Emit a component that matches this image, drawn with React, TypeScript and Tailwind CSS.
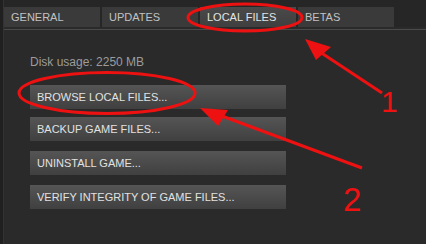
const tabs = ['GENERAL', 'UPDATES', 'LOCAL FILES', 'BETAS']

const actions = [
  { label: 'BROWSE LOCAL FILES...', mt: 'mt-0' },
  { label: 'BACKUP GAME FILES...', mt: 'mt-[8px]' },
  { label: 'UNINSTALL GAME...', mt: 'mt-[10px]' },
  { label: 'VERIFY INTEGRITY OF GAME FILES...', mt: 'mt-[10px]' },
]

export default function App() {
  return (
    <div
      className="relative w-[426px] h-[244px] overflow-hidden bg-[#202020]"
      style={{ fontFamily: '"Liberation Sans", Arial, sans-serif' }}
    >
      <div className="ml-[3px] h-full bg-[#2a2a2a] border-l border-[#333333]">
        {/* Tabs */}
        <div className="flex gap-[2px] pt-[7px] bg-[#262626]">
          {tabs.map((t) => (
            <div
              key={t}
              className={`w-[96px] h-[20px] flex items-center pl-[7px] text-[11px] leading-none ${
                t === 'LOCAL FILES'
                  ? 'bg-gradient-to-b from-[#4a4a4a] to-[#3f3f3f] text-[#e4e4e4]'
                  : 'bg-[#3a3a3a] text-[#c2c2c2]'
              }`}
            >
              {t}
            </div>
          ))}
        </div>
        <div className="h-[2px] bg-[#2a2a2a]" />
        <div className="h-px bg-[#4a4a4a]" />

        {/* Content */}
        <div className="pl-[26px] pt-[25px]">
          <p className="text-[12px] leading-[14px] text-[#9c9c9c]">Disk usage: 2250 MB</p>
          <div className="mt-[16px] flex flex-col">
            {actions.map((a) => (
              <button
                key={a.label}
                className={`${a.mt} w-[256px] h-[24px] flex items-center pl-[7px] text-[11px] text-[#e2e2e2] bg-gradient-to-b from-[#555555] to-[#404040]`}
              >
                {a.label}
              </button>
            ))}
          </div>
        </div>
      </div>

      {/* Red annotations */}
      <svg className="absolute inset-0" width="426" height="244" viewBox="0 0 426 244">
        <ellipse cx="245" cy="17.5" rx="57" ry="13.5" fill="none" stroke="#ee1111" strokeWidth="3" />
        <ellipse cx="107" cy="93" rx="88" ry="20.5" fill="none" stroke="#ee1111" strokeWidth="3" />
        <line x1="320" y1="52" x2="382" y2="93" stroke="#ee1111" strokeWidth="3" />
        <polygon points="305,39 316,60 331,47" fill="#ee1111" />
        <line x1="222" y1="116" x2="362" y2="168" stroke="#ee1111" strokeWidth="3" />
        <polygon points="200,108 218,126 228,110" fill="#ee1111" />
        <text x="381" y="112" fontSize="30" fill="#ee1111" fontFamily='"Liberation Sans", Arial, sans-serif'>
          1
        </text>
        <text x="343" y="211" fontSize="33" fill="#ee1111" fontFamily='"Liberation Sans", Arial, sans-serif'>
          2
        </text>
      </svg>
    </div>
  )
}
